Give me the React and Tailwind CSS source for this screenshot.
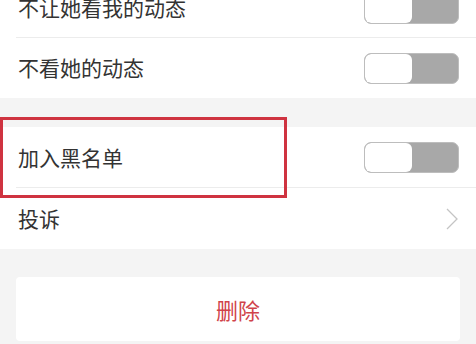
import React from 'react';

const font = { fontFamily: '"Noto Sans CJK SC", "Noto Sans", sans-serif' };

const Toggle = () => (
  <div className="flex h-[31px] w-[95px] overflow-hidden rounded-[7px] border border-[#bdbdbd] bg-[#a8a8a8]">
    <div className="h-full w-[47px] rounded-[6px] bg-white" />
  </div>
);

const Row = ({ label, children, divider, tall }) => (
  <div className={`relative flex ${tall ? 'h-[61px]' : 'h-[60px]'} items-center justify-between bg-white pl-[18px] pr-[17px]`}>
    <span className="text-[21px] text-[#333333]">{label}</span>
    {children}
    {divider && <div className="absolute bottom-0 left-[16px] right-0 h-px bg-[#ececec]" />}
  </div>
);

export default function App() {
  return (
    <div className="relative h-[344px] w-[476px] overflow-hidden bg-[#f4f4f4]" style={font}>
      <div className="-mt-[22px]">
        <Row label="不让她看我的动态" divider>
          <Toggle />
        </Row>
        <Row label="不看她的动态">
          <Toggle />
        </Row>
      </div>

      <div className="mt-[29px]">
        <Row label="加入黑名单" divider tall>
          <Toggle />
        </Row>
        <Row label="投诉" tall>
          <svg width="12" height="22" viewBox="0 0 12 22" fill="none" className="mr-[1px]">
            <path d="M1 1l10 10L1 21" stroke="#c4c4c4" strokeWidth="1.3" />
          </svg>
        </Row>
      </div>

      <div className="px-[16px] pt-[28px]">
        <div className="flex h-[64px] items-center justify-center rounded-[4px] bg-white">
          <span className="text-[22px] text-[#d0434a]">删除</span>
        </div>
      </div>

      <div className="pointer-events-none absolute left-0 top-[117px] h-[81px] w-[287px] border-[3px] border-[#cf3340]" />
    </div>
  );
}
